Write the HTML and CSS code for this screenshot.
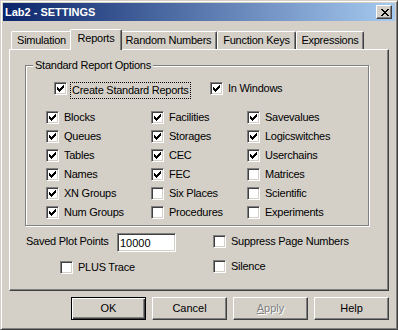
FILE: index.html
```html
<!DOCTYPE html>
<html lang="en">
<head>
  <meta charset="UTF-8" />
  <title>Lab2 - SETTINGS</title>
  <link rel="stylesheet" href="styles.css">
</head>
<body>
  <div class="window">
    <div class="titlebar">
      <span class="title">Lab2 - SETTINGS</span>
      <span class="close">
        <svg width="8" height="7" viewBox="0 0 8 7" shape-rendering="crispEdges"><path d="M0 0h2v1h-2zM6 0h2v1h-2zM1 1h2v1h-2zM5 1h2v1h-2zM2 2h4v1h-4zM3 3h2v1h-2zM2 4h4v1h-4zM1 5h2v1h-2zM5 5h2v1h-2zM0 6h2v1h-2zM6 6h2v1h-2z" fill="#000"/></svg>
      </span>
    </div>

    <div class="content">
      <div class="tabs">
        <div class="tab tab-sim">Simulation</div>
        <div class="tab tab-rep active">Reports</div>
        <div class="tab tab-rnd">Random Numbers</div>
        <div class="tab tab-fn">Function Keys</div>
        <div class="tab tab-exp">Expressions</div>
      </div>

      <div class="panel">
        <fieldset class="group">
          <legend>Standard Report Options</legend>
          <div class="top-row">
            <label class="check create"><span class="box"><svg class="tick" viewBox="0 0 7 7"><path d="M0 2h1v3h-1zM1 3h1v3h-1zM2 4h1v3h-1zM3 3h1v3h-1zM4 2h1v3h-1zM5 1h1v3h-1zM6 0h1v3h-1z"/></svg></span><span class="focus">Create Standard Reports</span></label>
            <label class="check"><span class="box"><svg class="tick" viewBox="0 0 7 7"><path d="M0 2h1v3h-1zM1 3h1v3h-1zM2 4h1v3h-1zM3 3h1v3h-1zM4 2h1v3h-1zM5 1h1v3h-1zM6 0h1v3h-1z"/></svg></span>In Windows</label>
          </div>
          <div class="options">
            <label class="check"><span class="box"><svg class="tick" viewBox="0 0 7 7"><path d="M0 2h1v3h-1zM1 3h1v3h-1zM2 4h1v3h-1zM3 3h1v3h-1zM4 2h1v3h-1zM5 1h1v3h-1zM6 0h1v3h-1z"/></svg></span>Blocks</label>
            <label class="check"><span class="box"><svg class="tick" viewBox="0 0 7 7"><path d="M0 2h1v3h-1zM1 3h1v3h-1zM2 4h1v3h-1zM3 3h1v3h-1zM4 2h1v3h-1zM5 1h1v3h-1zM6 0h1v3h-1z"/></svg></span>Facilities</label>
            <label class="check"><span class="box"><svg class="tick" viewBox="0 0 7 7"><path d="M0 2h1v3h-1zM1 3h1v3h-1zM2 4h1v3h-1zM3 3h1v3h-1zM4 2h1v3h-1zM5 1h1v3h-1zM6 0h1v3h-1z"/></svg></span>Savevalues</label>

            <label class="check"><span class="box"><svg class="tick" viewBox="0 0 7 7"><path d="M0 2h1v3h-1zM1 3h1v3h-1zM2 4h1v3h-1zM3 3h1v3h-1zM4 2h1v3h-1zM5 1h1v3h-1zM6 0h1v3h-1z"/></svg></span>Queues</label>
            <label class="check"><span class="box"><svg class="tick" viewBox="0 0 7 7"><path d="M0 2h1v3h-1zM1 3h1v3h-1zM2 4h1v3h-1zM3 3h1v3h-1zM4 2h1v3h-1zM5 1h1v3h-1zM6 0h1v3h-1z"/></svg></span>Storages</label>
            <label class="check"><span class="box"><svg class="tick" viewBox="0 0 7 7"><path d="M0 2h1v3h-1zM1 3h1v3h-1zM2 4h1v3h-1zM3 3h1v3h-1zM4 2h1v3h-1zM5 1h1v3h-1zM6 0h1v3h-1z"/></svg></span>Logicswitches</label>

            <label class="check"><span class="box"><svg class="tick" viewBox="0 0 7 7"><path d="M0 2h1v3h-1zM1 3h1v3h-1zM2 4h1v3h-1zM3 3h1v3h-1zM4 2h1v3h-1zM5 1h1v3h-1zM6 0h1v3h-1z"/></svg></span>Tables</label>
            <label class="check"><span class="box"><svg class="tick" viewBox="0 0 7 7"><path d="M0 2h1v3h-1zM1 3h1v3h-1zM2 4h1v3h-1zM3 3h1v3h-1zM4 2h1v3h-1zM5 1h1v3h-1zM6 0h1v3h-1z"/></svg></span>CEC</label>
            <label class="check"><span class="box"><svg class="tick" viewBox="0 0 7 7"><path d="M0 2h1v3h-1zM1 3h1v3h-1zM2 4h1v3h-1zM3 3h1v3h-1zM4 2h1v3h-1zM5 1h1v3h-1zM6 0h1v3h-1z"/></svg></span>Userchains</label>

            <label class="check"><span class="box"><svg class="tick" viewBox="0 0 7 7"><path d="M0 2h1v3h-1zM1 3h1v3h-1zM2 4h1v3h-1zM3 3h1v3h-1zM4 2h1v3h-1zM5 1h1v3h-1zM6 0h1v3h-1z"/></svg></span>Names</label>
            <label class="check"><span class="box"><svg class="tick" viewBox="0 0 7 7"><path d="M0 2h1v3h-1zM1 3h1v3h-1zM2 4h1v3h-1zM3 3h1v3h-1zM4 2h1v3h-1zM5 1h1v3h-1zM6 0h1v3h-1z"/></svg></span>FEC</label>
            <label class="check"><span class="box"></span>Matrices</label>

            <label class="check"><span class="box"><svg class="tick" viewBox="0 0 7 7"><path d="M0 2h1v3h-1zM1 3h1v3h-1zM2 4h1v3h-1zM3 3h1v3h-1zM4 2h1v3h-1zM5 1h1v3h-1zM6 0h1v3h-1z"/></svg></span>XN Groups</label>
            <label class="check"><span class="box"></span>Six Places</label>
            <label class="check"><span class="box"></span>Scientific</label>

            <label class="check"><span class="box"><svg class="tick" viewBox="0 0 7 7"><path d="M0 2h1v3h-1zM1 3h1v3h-1zM2 4h1v3h-1zM3 3h1v3h-1zM4 2h1v3h-1zM5 1h1v3h-1zM6 0h1v3h-1z"/></svg></span>Num Groups</label>
            <label class="check"><span class="box"></span>Procedures</label>
            <label class="check"><span class="box"></span>Experiments</label>
          </div>
        </fieldset>

        <div class="extra">
          <div class="plot">
            <span class="plot-label">Saved Plot Points</span>
            <input type="text" class="field" value="10000" readonly>
          </div>
          <label class="check suppress"><span class="box"></span>Suppress Page Numbers</label>
          <label class="check plus"><span class="box"></span>PLUS Trace</label>
          <label class="check"><span class="box"></span>Silence</label>
        </div>
      </div>

      <div class="buttons">
        <button type="button" class="btn default">OK</button>
        <button type="button" class="btn">Cancel</button>
        <button type="button" class="btn disabled"><u>A</u>pply</button>
        <button type="button" class="btn">Help</button>
      </div>
    </div>
  </div>
</body>
</html>
```

FILE: styles.css
```css
* {
  box-sizing: border-box;
}

body {
  margin: 0;
  font-family: 'Liberation Sans', Arial, sans-serif;
  font-size: 11px;
  line-height: 13px;
  letter-spacing: -0.25px;
  color: #000;
  background: #d4d0c8;
}

.window {
  width: 398px;
  height: 330px;
  padding: 2px;
  background: #d4d0c8;
  border: 1px solid;
  border-color: #d4d0c8 #404040 #404040 #d4d0c8;
  box-shadow: inset 1px 1px #fff, inset -1px -1px #808080;
}

/* title bar */
.titlebar {
  height: 18px;
  display: flex;
  align-items: center;
  justify-content: space-between;
  padding: 0 3px 0 2px;
  background: linear-gradient(to right, #0a246a, #a6caf0);
}

.title {
  color: #fff;
  font-weight: bold;
  letter-spacing: 0;
}

.close {
  width: 16px;
  height: 14px;
  display: flex;
  align-items: center;
  justify-content: center;
  padding-left: 1px;
  background: #d4d0c8;
  border: 1px solid;
  border-color: #fff #404040 #404040 #fff;
  box-shadow: inset -1px -1px #808080;
}

.close svg {
  display: block;
}

/* tabs */
.content {
  padding: 8px 6px 0 6px;
}

.tabs {
  height: 20px;
  display: flex;
  align-items: flex-end;
  padding-left: 2px;
}

.tab {
  height: 18px;
  line-height: 16px;
  text-align: center;
  border: 1px solid;
  border-bottom: none;
  border-color: #fff #404040 #404040 #fff;
  border-radius: 2px 2px 0 0;
  box-shadow: inset -1px 0 #808080;
  background: #d4d0c8;
}

.tab-sim { width: 61px; }
.tab-rep { width: 48px; }
.tab-rnd { width: 97px; }
.tab-fn { width: 79px; }
.tab-exp { width: 68px; }

.tab.active {
  position: relative;
  z-index: 1;
  width: 52px;
  height: 21px;
  margin: 0 -2px -1px;
  line-height: 17px;
}

/* panel */
.panel {
  height: 242px;
  padding: 0 15px;
  border: 1px solid;
  border-color: #fff #404040 #404040 #fff;
  box-shadow: inset -1px -1px #808080;
}

.group {
  width: 344px;
  margin: 9px 0 0;
  padding: 0 0 6px;
  min-width: 0;
  border: 1px solid #808080;
  box-shadow: inset 1px 1px #fff, 1px 1px #fff;
}

.group legend {
  margin-left: 7px;
  padding: 0 2px;
  line-height: 13px;
  background: #d4d0c8;
}

.check {
  display: flex;
  align-items: center;
  height: 13px;
  white-space: nowrap;
}

.box {
  width: 13px;
  height: 13px;
  flex: none;
  margin-right: 5px;
  padding: 2px;
  background: #fff;
  border: 1px solid;
  border-color: #808080 #fff #fff #808080;
  box-shadow: inset 1px 1px #404040, inset -1px -1px #d4d0c8;
}

.tick {
  display: block;
  width: 7px;
  height: 7px;
  shape-rendering: crispEdges;
  fill: #000;
}

.top-row {
  display: flex;
  margin-top: 10px;
  padding-left: 28px;
}

.create {
  width: 156px;
  align-items: flex-start;
}

.create .box {
  margin-right: 3px;
}

.focus {
  height: 17px;
  padding: 0 1px;
  line-height: 14px;
  border: 1px dotted #000;
}

.options {
  display: grid;
  grid-template-columns: 105px 96px 1fr;
  grid-auto-rows: 13px;
  row-gap: 6px;
  margin-top: 16px;
  padding-left: 20px;
}

/* below the group */
.extra {
  display: grid;
  grid-template-columns: 188px 1fr;
  row-gap: 8px;
  margin-top: 7px;
}

.plot {
  display: flex;
  align-items: flex-start;
}

.plot-label {
  width: 92px;
  padding: 2px 0 0 1px;
}

.field {
  width: 59px;
  height: 19px;
  padding: 1px 2px 0;
  font: inherit;
  background: #fff;
  border: 1px solid;
  border-color: #808080 #fff #fff #808080;
  box-shadow: inset 1px 1px #404040, inset -1px -1px #d4d0c8;
  outline: none;
}

.suppress {
  margin-top: 2px;
}

.plus {
  margin: 1px 0 0 35px;
}

/* buttons */
.buttons {
  display: flex;
  justify-content: flex-end;
  gap: 6px;
  margin-top: 6px;
}

.btn {
  width: 75px;
  height: 23px;
  padding: 0;
  font: inherit;
  color: #000;
  background: #d4d0c8;
  border: 1px solid;
  border-color: #fff #404040 #404040 #fff;
  box-shadow: inset -1px -1px #808080;
}

.btn.default {
  border: 1px solid #000;
  box-shadow: inset 1px 1px #fff, inset -1px -1px #404040, inset -2px -2px #808080;
}

.btn.disabled {
  color: #808080;
  text-shadow: 1px 1px #fff;
}
```
